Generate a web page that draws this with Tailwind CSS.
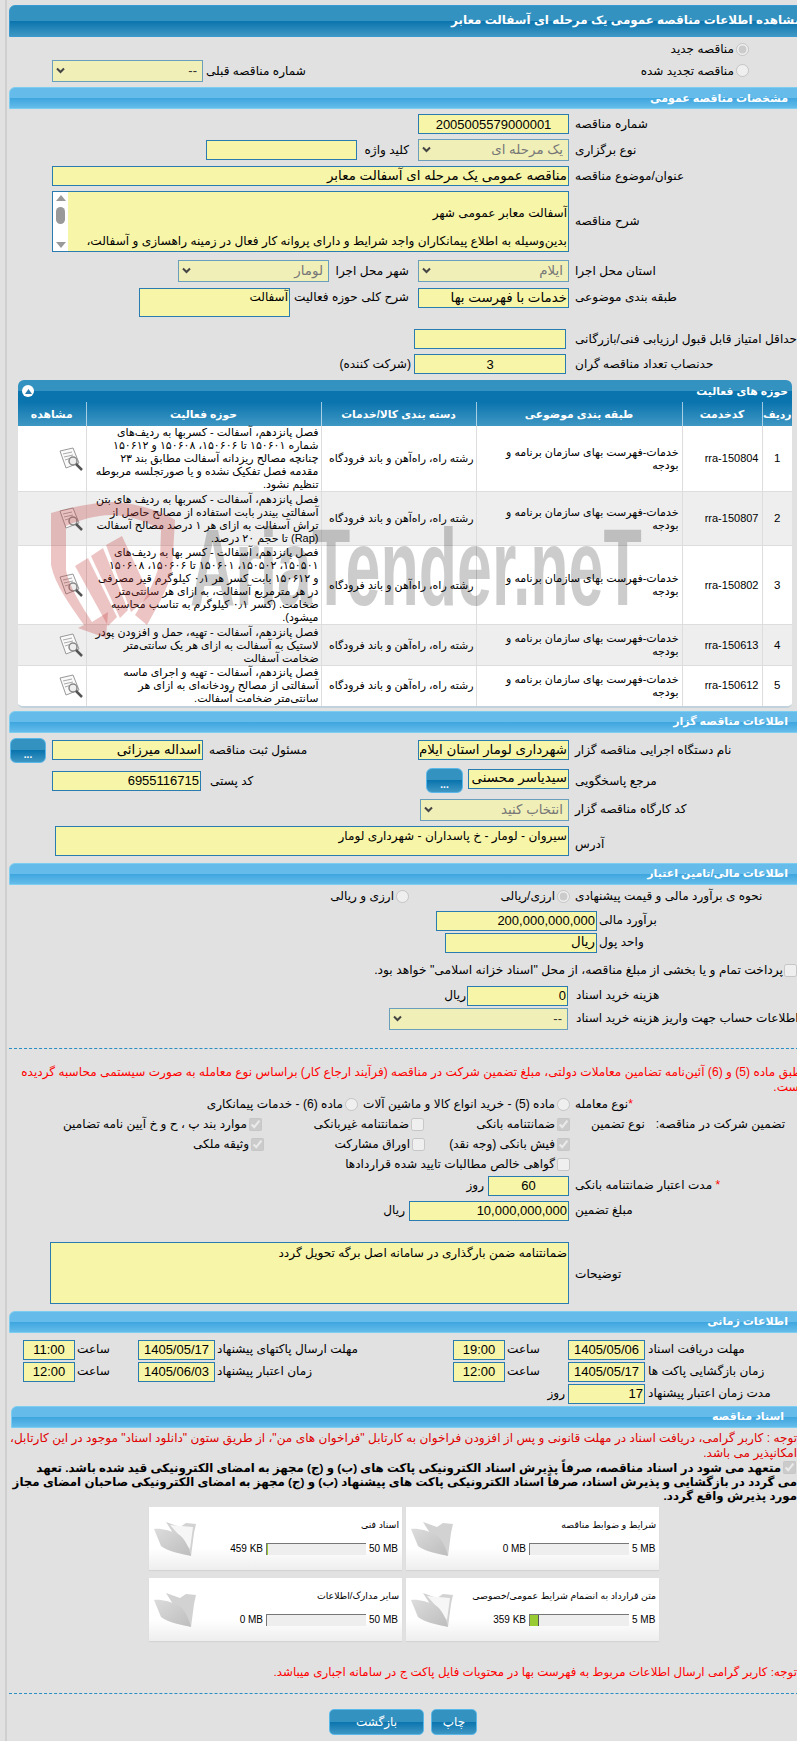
<!DOCTYPE html>
<html lang="fa">
<head>
<meta charset="UTF-8" />
<title>مشاهده اطلاعات مناقصه</title>
<script src="https://cdn.jsdelivr.net/npm/@tailwindcss/browser@4"></script>
</head>
<body class="relative w-[797px] h-[1741px] overflow-hidden bg-[#e1e1e1] text-black text-[12.1px] [font-family:'Liberation_Sans','DejaVu_Sans',sans-serif]">

<div class="absolute left-[5px] top-0 h-full w-[2px] bg-[#cfcfcf]"></div>

<div dir="rtl" class="ml-[9px] w-[800px] pt-[5px]">

  <!-- title -->
  <div class="h-[32px] flex items-center pr-[6px] rounded-tl-[6px] font-bold text-[11.9px] text-white bg-[linear-gradient(#3392c0_50%,#0a74ae_50%,#3f97c3)] border border-[#3a9ad0] whitespace-nowrap">مشاهده اطلاعات مناقصه عمومی یک مرحله ای آسفالت معابر</div>

  <div class="flex items-center h-[14px] mt-[5px] pr-[60px]">
    <input type="radio" checked disabled class="m-0 size-[13px]" />
    <span class="mr-[2px]">مناقصه جدید</span>
  </div>
  <div class="flex items-center justify-between h-[22px] mt-[4px] pr-[60px] pl-[43px]">
    <div class="flex items-center">
      <input type="radio" disabled class="m-0 size-[13px]" />
      <span class="mr-[2px]">مناقصه تجدید شده</span>
    </div>
    <div class="flex items-center gap-[3px]">
      <span>شماره مناقصه قبلی</span>
      <div class="relative w-[151px] h-[22px]">
        <select disabled class="appearance-none w-full h-full px-[5px] bg-[#f0efb8] border border-[#6a9fbb] text-[#333] text-[13px]"><option>--</option></select>
        <svg class="absolute left-[4px] top-[7px] w-[9px] h-[7px]" viewBox="0 0 9 7"><path d="M1 1.500 4.500 5 8 1.500" fill="none" stroke="#444" stroke-width="2"/></svg>
      </div>
    </div>
  </div>

  <!-- general -->
  <div class="h-[22px] mt-[5px] flex items-center pr-[20px] rounded-tl-[6px] font-bold text-[11px] text-white bg-[linear-gradient(#65bbea_50%,#3ea5de_50%,#64bcea)] border border-[#7ccdf0]">مشخصات مناقصه عمومی</div>

  <div class="flex items-center h-[20px] mt-[5px]">
    <label class="w-[234px] text-left">شماره مناقصه</label>
    <input value="2005005579000001" readonly class="w-[151px] h-[20px] mr-[6px] px-[1px] text-center text-[13px] bg-[#f7f5a8] border border-[#2a7bb0]" />
  </div>
  <div class="flex items-center h-[22px] mt-[5px]">
    <label class="w-[234px] text-left">نوع برگزاری</label>
    <div class="relative w-[151px] h-[22px] mr-[6px]">
      <select disabled class="appearance-none w-full h-full px-[5px] bg-[#f0efb8] border border-[#6a9fbb] text-[#777] text-[13.4px]"><option>یک مرحله ای</option></select>
      <svg class="absolute left-[4px] top-[7px] w-[9px] h-[7px]" viewBox="0 0 9 7"><path d="M1 1.500 4.500 5 8 1.500" fill="none" stroke="#444" stroke-width="2"/></svg>
    </div>
    <label class="w-[47px] mr-[9px] text-right whitespace-nowrap">کلید واژه</label>
    <input readonly class="w-[151px] h-[20px] mr-[5px] bg-[#f7f5a8] border border-[#2a7bb0]" />
  </div>
  <div class="flex items-center h-[20px] mt-[5px]">
    <label class="w-[234px] text-left">عنوان/موضوع مناقصه</label>
    <input value="مناقصه عمومی یک مرحله ای آسفالت معابر" readonly class="w-[517px] h-[20px] mr-[6px] px-[1px] text-[13.4px] bg-[#f7f5a8] border border-[#2a7bb0]" />
  </div>
  <div class="flex items-center h-[61px] mt-[5px]">
    <label class="w-[234px] text-left">شرح مناقصه</label>
    <div class="flex w-[517px] h-[61px] mr-[6px] bg-[#f7f5a8] border border-[#2a7bb0] overflow-hidden">
      <div class="flex-1 px-[1px] leading-[14px] whitespace-nowrap overflow-hidden"><br />آسفالت معابر عمومی شهر<br /><br />بدین‌وسیله به اطلاع پیمانکاران واجد شرایط و دارای پروانه کار فعال در زمینه راهسازی و آسفالت،</div>
      <div class="w-[15px] bg-white flex flex-col items-center justify-between py-[3px]">
        <div class="w-0 h-0 border-x-[5px] border-x-transparent border-b-[6px] border-b-[#999]"></div>
        <div class="w-[9px] h-[17px] -mt-[12px] rounded-full bg-[#999]"></div>
        <div class="w-0 h-0 border-x-[5px] border-x-transparent border-t-[6px] border-t-[#999]"></div>
      </div>
    </div>
  </div>
  <div class="flex items-center h-[22px] mt-[8px]">
    <label class="w-[234px] text-left">استان محل اجرا</label>
    <div class="relative w-[151px] h-[22px] mr-[6px]">
      <select disabled class="appearance-none w-full h-full px-[5px] bg-[#f0efb8] border border-[#6a9fbb] text-[#777] text-[13.4px]"><option>ایلام</option></select>
      <svg class="absolute left-[4px] top-[7px] w-[9px] h-[7px]" viewBox="0 0 9 7"><path d="M1 1.500 4.500 5 8 1.500" fill="none" stroke="#444" stroke-width="2"/></svg>
    </div>
    <label class="w-[77px] mr-[9px] text-right whitespace-nowrap">شهر محل اجرا</label>
    <div class="relative w-[151px] h-[22px] mr-[3px]">
      <select disabled class="appearance-none w-full h-full px-[5px] bg-[#f0efb8] border border-[#6a9fbb] text-[#777] text-[13.4px]"><option>لومار</option></select>
      <svg class="absolute left-[4px] top-[7px] w-[9px] h-[7px]" viewBox="0 0 9 7"><path d="M1 1.500 4.500 5 8 1.500" fill="none" stroke="#444" stroke-width="2"/></svg>
    </div>
  </div>
  <div class="flex items-start h-[28px] mt-[6px]">
    <label class="w-[234px] text-left">طبقه بندی موضوعی</label>
    <input value="خدمات با فهرست بها" readonly class="w-[151px] h-[20px] mr-[6px] px-[1px] text-[13.4px] bg-[#f7f5a8] border border-[#2a7bb0]" />
    <label class="w-[114px] mr-[9px] text-right whitespace-nowrap">شرح کلی حوزه فعالیت</label>
    <div class="w-[151px] h-[29px] mr-[5px] px-[1px] text-[12px] leading-[16px] bg-[#f7f5a8] border border-[#2a7bb0]">آسفالت</div>
  </div>
  <div class="flex items-center h-[20px] mt-[13px]">
    <label class="w-[234px] text-left whitespace-nowrap">حداقل امتیاز قابل قبول ارزیابی فنی/بازرگانی</label>
    <input readonly class="w-[152px] h-[20px] mr-[9px] bg-[#f7f5a8] border border-[#2a7bb0]" />
  </div>
  <div class="flex items-center h-[20px] mt-[5px]">
    <label class="w-[234px] text-left">حدنصاب تعداد مناقصه گران</label>
    <input value="3" readonly class="w-[152px] h-[20px] mr-[9px] text-center text-[13px] bg-[#f7f5a8] border border-[#2a7bb0]" />
    <span class="mr-[3px]">(شرکت کننده)</span>
  </div>

  <!-- activities -->
  <div class="w-[774px] mr-[17px] mt-[6px] rounded-t-[6px] rounded-b-[5px] border-b-2 border-[#c2d2dc] overflow-hidden">
    <div class="relative h-[22px] flex items-center pr-[4px] font-bold text-[10.8px] text-white bg-[linear-gradient(#3392c0_50%,#0a74ae_50%,#0a74ae)]">
      حوزه های فعالیت
      <div class="absolute left-[4px] top-[5px] size-[12px] rounded-full bg-white flex items-center justify-center"><svg class="w-[7px] h-[5px]" viewBox="0 0 7 5"><path d="M0 5 3.500 0 7 5z" fill="#2a7bb0"/></svg></div>
    </div>
    <table class="w-[774px] table-fixed border-collapse text-[11px] leading-[13px]">
      <colgroup><col class="w-[30px]" /><col class="w-[80px]" /><col class="w-[206px]" /><col class="w-[155px]" /><col class="w-[235px]" /><col class="w-[68px]" /></colgroup>
      <thead>
        <tr class="h-[24px] font-bold text-[10.8px] text-white bg-[linear-gradient(#0a74ae,#3f97c3)]">
          <th class="border-l border-white/60 font-bold">ردیف</th>
          <th class="border-l border-white/60 font-bold">کدخدمت</th>
          <th class="border-l border-white/60 font-bold">طبقه بندی موضوعی</th>
          <th class="border-l border-white/60 font-bold">دسته بندی کالا/خدمات</th>
          <th class="border-l border-white/60 font-bold">حوزه فعالیت</th>
          <th class="font-bold">مشاهده</th>
        </tr>
      </thead>
      <tbody>
        <tr class="h-[65px] bg-white border-b border-[#ddd]">
          <td class="border-l border-[#ddd] text-center text-[11.5px]">1</td>
          <td class="border-l border-[#ddd] text-right pr-[3px]">rra-150804</td>
          <td class="border-l border-[#ddd] pr-[3px]">خدمات-فهرست بهای سازمان برنامه و<br />بودجه</td>
          <td class="border-l border-[#ddd] pr-[2px]">رشته راه، راه‌آهن و باند فرودگاه</td>
          <td class="border-l border-[#ddd] pr-[2px] whitespace-nowrap">فصل پانزدهم، آسفالت - کسربها به ردیف‌های<br />شماره ۱۵۰۶۰۱ تا ۱۵۰۶۰۶، ۱۵۰۶۰۸ و ۱۵۰۶۱۲<br />چنانچه مصالح ریزدانه آسفالت مطابق بند ۲۳<br />مقدمه فصل تفکیک نشده و یا صورتجلسه مربوطه<br />تنظیم نشود.</td>
          <td><svg class="w-[25px] h-[24px] mr-[2px]" viewBox="0 0 25 24"><path d="M1 4 14 1 20 16 7 21z" fill="#fafafa" stroke="#999"/><path d="M4 7 13 5M5 10 14 8M6 13 12 11" stroke="#aaa"/><circle cx="14" cy="14" r="4" fill="#eee" stroke="#888" stroke-width="1.500"/><path d="M17 17 23 23" stroke="#555" stroke-width="2.500"/></svg></td>
        </tr>
        <tr class="h-[54px] bg-[#eeeeee] border-b border-[#ddd]">
          <td class="border-l border-[#ddd] text-center text-[11.5px]">2</td>
          <td class="border-l border-[#ddd] text-right pr-[3px]">rra-150807</td>
          <td class="border-l border-[#ddd] pr-[3px]">خدمات-فهرست بهای سازمان برنامه و<br />بودجه</td>
          <td class="border-l border-[#ddd] pr-[2px]">رشته راه، راه‌آهن و باند فرودگاه</td>
          <td class="border-l border-[#ddd] pr-[2px] whitespace-nowrap">فصل پانزدهم، آسفالت - کسربها به ردیف های بتن<br />آسفالتی بیندر بابت استفاده از مصالح حاصل از<br />تراش آسفالت به ازای هر ۱ درصد مصالح آسفالت<br />(Rap) تا حجم ۲۰ درصد.</td>
          <td><svg class="w-[25px] h-[24px] mr-[2px]" viewBox="0 0 25 24"><path d="M1 4 14 1 20 16 7 21z" fill="#fafafa" stroke="#999"/><path d="M4 7 13 5M5 10 14 8M6 13 12 11" stroke="#aaa"/><circle cx="14" cy="14" r="4" fill="#eee" stroke="#888" stroke-width="1.500"/><path d="M17 17 23 23" stroke="#555" stroke-width="2.500"/></svg></td>
        </tr>
        <tr class="h-[78px] bg-white border-b border-[#ddd]">
          <td class="border-l border-[#ddd] text-center text-[11.5px]">3</td>
          <td class="border-l border-[#ddd] text-right pr-[3px]">rra-150802</td>
          <td class="border-l border-[#ddd] pr-[3px]">خدمات-فهرست بهای سازمان برنامه و<br />بودجه</td>
          <td class="border-l border-[#ddd] pr-[2px]">رشته راه، راه‌آهن و باند فرودگاه</td>
          <td class="border-l border-[#ddd] pr-[2px] whitespace-nowrap">فصل پانزدهم، آسفالت - کسر بها به ردیف‌های<br />۱۵۰۵۰۱، ۱۵۰۵۰۲، ۱۵۰۶۰۱ تا ۱۵۰۶۰۶، ۱۵۰۶۰۸<br />و ۱۵۰۶۱۲ بابت کسر هر ۰٫۱ کیلوگرم قیر مصرفی<br />در هر مترمربع آسفالت، به ازای هر سانتی‌متر<br />ضخامت. (کسر ۰٫۱ کیلوگرم به تناسب محاسبه<br />میشود).</td>
          <td><svg class="w-[25px] h-[24px] mr-[2px]" viewBox="0 0 25 24"><path d="M1 4 14 1 20 16 7 21z" fill="#fafafa" stroke="#999"/><path d="M4 7 13 5M5 10 14 8M6 13 12 11" stroke="#aaa"/><circle cx="14" cy="14" r="4" fill="#eee" stroke="#888" stroke-width="1.500"/><path d="M17 17 23 23" stroke="#555" stroke-width="2.500"/></svg></td>
        </tr>
        <tr class="h-[41px] bg-[#eeeeee] border-b border-[#ddd]">
          <td class="border-l border-[#ddd] text-center text-[11.5px]">4</td>
          <td class="border-l border-[#ddd] text-right pr-[3px]">rra-150613</td>
          <td class="border-l border-[#ddd] pr-[3px]">خدمات-فهرست بهای سازمان برنامه و<br />بودجه</td>
          <td class="border-l border-[#ddd] pr-[2px]">رشته راه، راه‌آهن و باند فرودگاه</td>
          <td class="border-l border-[#ddd] pr-[2px] whitespace-nowrap">فصل پانزدهم، آسفالت - تهیه، حمل و افزودن پودر<br />لاستیک به آسفالت به ازای هر یک سانتی‌متر<br />ضخامت آسفالت</td>
          <td><svg class="w-[25px] h-[24px] mr-[2px]" viewBox="0 0 25 24"><path d="M1 4 14 1 20 16 7 21z" fill="#fafafa" stroke="#999"/><path d="M4 7 13 5M5 10 14 8M6 13 12 11" stroke="#aaa"/><circle cx="14" cy="14" r="4" fill="#eee" stroke="#888" stroke-width="1.500"/><path d="M17 17 23 23" stroke="#555" stroke-width="2.500"/></svg></td>
        </tr>
        <tr class="h-[40px] bg-white">
          <td class="border-l border-[#ddd] text-center text-[11.5px]">5</td>
          <td class="border-l border-[#ddd] text-right pr-[3px]">rra-150612</td>
          <td class="border-l border-[#ddd] pr-[3px]">خدمات-فهرست بهای سازمان برنامه و<br />بودجه</td>
          <td class="border-l border-[#ddd] pr-[2px]">رشته راه، راه‌آهن و باند فرودگاه</td>
          <td class="border-l border-[#ddd] pr-[2px] whitespace-nowrap">فصل پانزدهم، آسفالت - تهیه و اجرای ماسه<br />آسفالتی از مصالح رودخانه‌ای به ازای هر<br />سانتی‌متر ضخامت آسفالت.</td>
          <td><svg class="w-[25px] h-[24px] mr-[2px]" viewBox="0 0 25 24"><path d="M1 4 14 1 20 16 7 21z" fill="#fafafa" stroke="#999"/><path d="M4 7 13 5M5 10 14 8M6 13 12 11" stroke="#aaa"/><circle cx="14" cy="14" r="4" fill="#eee" stroke="#888" stroke-width="1.500"/><path d="M17 17 23 23" stroke="#555" stroke-width="2.500"/></svg></td>
        </tr>
      </tbody>
    </table>
  </div>

  <!-- organiser -->
  <div class="h-[22px] mt-[3px] flex items-center pr-[20px] rounded-tl-[6px] font-bold text-[11px] text-white bg-[linear-gradient(#65bbea_50%,#3ea5de_50%,#64bcea)] border border-[#7ccdf0]">اطلاعات مناقصه گزار</div>

  <div class="flex items-center h-[25px] mt-[5px]">
    <label class="w-[234px] text-left">نام دستگاه اجرایی مناقصه گزار</label>
    <input value="شهرداری لومار استان ایلام" readonly class="w-[151px] h-[20px] mr-[6px] px-[1px] text-[13.4px] bg-[#f7f5a8] border border-[#2a7bb0]" />
    <label class="w-[209px] text-left whitespace-nowrap">مسئول ثبت مناقصه</label>
    <input value="اسداله میرزائی" readonly class="w-[151px] h-[20px] mr-[6px] px-[1px] text-[13.4px] bg-[#f7f5a8] border border-[#2a7bb0]" />
    <button class="w-[36px] h-[25px] mr-[6px] rounded-[6px] border border-[#5ab8e8] font-bold text-white text-[10px] leading-[8px] pt-[10px] bg-[linear-gradient(#3392c0_50%,#0a74ae_50%,#3f97c3)]">...</button>
  </div>
  <div class="flex items-start h-[25px] mt-[5px]">
    <label class="w-[234px] text-left mt-[4px]">مرجع پاسخگویی</label>
    <input value="سیدیاسر محسنی" readonly class="w-[101px] h-[20px] mr-[6px] mt-[1px] px-[1px] text-[13.4px] bg-[#f7f5a8] border border-[#2a7bb0]" />
    <button class="w-[37px] h-[25px] mr-[5px] rounded-[6px] border border-[#5ab8e8] font-bold text-white text-[10px] leading-[8px] pt-[10px] bg-[linear-gradient(#3392c0_50%,#0a74ae_50%,#3f97c3)]">...</button>
    <label class="w-[219px] mt-[4px] pl-[3px] text-left whitespace-nowrap">کد پستی</label>
    <input value="6955116715" readonly class="w-[149px] h-[20px] mr-[6px] mt-[3px] px-[1px] text-[13px] bg-[#f7f5a8] border border-[#2a7bb0]" />
  </div>
  <div class="flex items-center h-[22px] mt-[6px]">
    <label class="w-[234px] text-left">کد کارگاه مناقصه گزار</label>
    <div class="relative w-[149px] h-[22px] mr-[6px]">
      <select disabled class="appearance-none w-full h-full px-[5px] bg-[#f0efb8] border border-[#6a9fbb] text-[#777] text-[13.4px]"><option>انتخاب کنید</option></select>
      <svg class="absolute left-[4px] top-[7px] w-[9px] h-[7px]" viewBox="0 0 9 7"><path d="M1 1.500 4.500 5 8 1.500" fill="none" stroke="#444" stroke-width="2"/></svg>
    </div>
  </div>
  <div class="flex items-center h-[30px] mt-[5px]">
    <label class="w-[234px] text-left mt-[8px]">آدرس</label>
    <div class="w-[514px] h-[30px] mr-[6px] px-[1px] bg-[#f7f5a8] border border-[#2a7bb0]">سیروان - لومار - خ پاسداران - شهرداری لومار</div>
  </div>

  <!-- finance -->
  <div class="h-[22px] mt-[7px] flex items-center pr-[20px] rounded-tl-[6px] font-bold text-[11px] text-white bg-[linear-gradient(#65bbea_50%,#3ea5de_50%,#64bcea)] border border-[#7ccdf0]">اطلاعات مالی/تامین اعتبار</div>

  <div class="flex items-center h-[14px] mt-[5px]">
    <label class="w-[234px] text-left whitespace-nowrap">نحوه ی برآورد مالی و قیمت پیشنهادی</label>
    <input type="radio" checked disabled class="m-0 mr-[5px] size-[13px]" />
    <span class="mr-[2px] w-[146px]">ارزی/ریالی</span>
    <input type="radio" disabled class="m-0 size-[13px]" />
    <span class="mr-[2px]">ارزی و ریالی</span>
  </div>
  <div class="flex items-center h-[20px] mt-[7px]">
    <label class="w-[210px] text-left">برآورد مالی</label>
    <input value="200,000,000,000" readonly class="w-[161px] h-[20px] mr-[2px] px-[1px] text-[13px] bg-[#f7f5a8] border border-[#2a7bb0]" />
  </div>
  <div class="flex items-center h-[20px] mt-[2px]">
    <label class="w-[210px] text-left">واحد پول</label>
    <input value="ریال" readonly class="w-[152px] h-[20px] mr-[2px] px-[1px] text-[13.4px] bg-[#f7f5a8] border border-[#2a7bb0]" />
  </div>
  <div class="flex items-center h-[14px] mt-[11px] pr-[12px]">
    <input type="checkbox" disabled class="m-0 size-[13px]" />
    <span class="mr-[1px] text-[12.3px]">پرداخت تمام و یا بخشی از مبلغ مناقصه، از محل "اسناد خزانه اسلامی" خواهد بود.</span>
  </div>
  <div class="flex items-center h-[20px] mt-[8px]">
    <label class="w-[233px] text-left">هزینه خرید اسناد</label>
    <input value="0" readonly class="w-[101px] h-[20px] mr-[8px] px-[1px] text-[13px] bg-[#f7f5a8] border border-[#2a7bb0]" />
    <span class="mr-[1px]">ریال</span>
  </div>
  <div class="flex items-center h-[22px] mt-[2px]">
    <label class="w-[233px] text-left whitespace-nowrap">اطلاعات حساب جهت واریز هزینه خرید اسناد</label>
    <div class="relative w-[179px] h-[22px] mr-[8px]">
      <select disabled class="appearance-none w-full h-full px-[5px] bg-[#f0efb8] border border-[#6a9fbb] text-[#333] text-[13px]"><option>--</option></select>
      <svg class="absolute left-[4px] top-[7px] w-[9px] h-[7px]" viewBox="0 0 9 7"><path d="M1 1.500 4.500 5 8 1.500" fill="none" stroke="#444" stroke-width="2"/></svg>
    </div>
  </div>
  <div class="mt-[18px] border-t border-dashed border-[#2a8ec3]"></div>

  <!-- guarantee -->
  <p class="mt-[16px] pr-[7px] leading-[15px] text-[#ff0000] whitespace-nowrap">طبق ماده (5) و (6) آئین‌نامه تضامین معاملات دولتی، مبلغ تضمین شرکت در مناقصه (فرآیند ارجاع کار) براساس نوع معامله به صورت سیستمی محاسبه گردیده<br />است.</p>
  <div class="flex items-center h-[20px]">
    <label class="w-[234px] text-left"><span class="text-[#ff0000]">*</span>نوع معامله</label>
    <input type="radio" disabled class="m-0 mr-[5px] size-[13px]" />
    <span class="mr-[2px] w-[197px] whitespace-nowrap">ماده (5) - خرید انواع کالا و ماشین آلات</span>
    <input type="radio" disabled class="m-0 size-[13px]" />
    <span class="mr-[2px]">ماده (6) - خدمات پیمانکاری</span>
  </div>
  <div class="flex items-center h-[20px]">
    <label class="w-[150px] pr-[24px] whitespace-nowrap text-left">تضمین شرکت در مناقصه:</label>
    <label class="w-[68px] text-left">نوع تضمین</label>
    <input type="checkbox" checked disabled class="m-0 mr-[21px] size-[13px]" />
    <span class="mr-[2px] w-[131px]">ضمانتنامه بانکی</span>
    <input type="checkbox" disabled class="m-0 size-[13px]" />
    <span class="mr-[2px] w-[147px]">ضمانتنامه غیربانکی</span>
    <input type="checkbox" checked disabled class="m-0 size-[13px]" />
    <span class="mr-[2px] whitespace-nowrap">موارد بند پ ، ح و خ آیین نامه تضامین</span>
  </div>
  <div class="flex items-center h-[20px]">
    <div class="w-[234px]"></div>
    <input type="checkbox" checked disabled class="m-0 mr-[5px] size-[13px]" />
    <span class="mr-[2px] w-[130px] whitespace-nowrap">فیش بانکی (وجه نقد)</span>
    <input type="checkbox" disabled class="m-0 size-[13px]" />
    <span class="mr-[2px] w-[146px]">اوراق مشارکت</span>
    <input type="checkbox" checked disabled class="m-0 size-[13px]" />
    <span class="mr-[2px]">وثیقه ملکی</span>
  </div>
  <div class="flex items-center h-[20px]">
    <div class="w-[234px]"></div>
    <input type="checkbox" disabled class="m-0 mr-[5px] size-[13px]" />
    <span class="mr-[2px]">گواهی خالص مطالبات تایید شده قراردادها</span>
  </div>
  <div class="flex items-center h-[20px] mt-[1px]">
    <label class="w-[234px] text-left"><span class="text-[#ff0000]">*</span> مدت اعتبار ضمانتنامه بانکی</label>
    <input value="60" readonly class="w-[81px] h-[20px] mr-[6px] text-center text-[13px] bg-[#f7f5a8] border border-[#2a7bb0]" />
    <span class="mr-[4px]">روز</span>
  </div>
  <div class="flex items-center h-[20px] mt-[5px]">
    <label class="w-[234px] text-left">مبلغ تضمین</label>
    <input value="10,000,000,000" readonly class="w-[160px] h-[20px] mr-[6px] px-[1px] text-[13px] bg-[#f7f5a8] border border-[#2a7bb0]" />
    <span class="mr-[4px]">ریال</span>
  </div>
  <div class="flex items-center h-[62px] mt-[21px]">
    <label class="w-[234px] text-left mt-[4px]">توضیحات</label>
    <div class="w-[519px] h-[62px] mr-[6px] px-[1px] pt-[1px] bg-[#f7f5a8] border border-[#2a7bb0]">ضمانتنامه ضمن بارگذاری در سامانه اصل برگه تحویل گردد</div>
  </div>

  <!-- dates -->
  <div class="h-[22px] mt-[7px] flex items-center pr-[20px] rounded-tl-[6px] font-bold text-[11px] text-white bg-[linear-gradient(#65bbea_50%,#3ea5de_50%,#64bcea)] border border-[#7ccdf0]">اطلاعات زمانی</div>

  <div class="flex items-center h-[20px] mt-[7px]">
    <label class="w-[161px] text-left">مهلت دریافت اسناد</label>
    <input value="1405/05/06" readonly class="w-[77px] h-[20px] mr-[3px] text-center text-[13px] bg-[#f7f5a8] border border-[#2a7bb0]" />
    <label class="w-[58px] mr-[3px] text-left">ساعت</label>
    <input value="19:00" readonly class="w-[52px] h-[20px] mr-[2px] text-center text-[13px] bg-[#f7f5a8] border border-[#2a7bb0]" />
    <label class="w-[236px] text-left">مهلت ارسال پاکتهای پیشنهاد</label>
    <input value="1405/05/17" readonly class="w-[77px] h-[20px] mr-[2px] text-center text-[13px] bg-[#f7f5a8] border border-[#2a7bb0]" />
    <label class="w-[59px] mr-[2px] text-left">ساعت</label>
    <input value="11:00" readonly class="w-[52px] h-[20px] mr-[2px] text-center text-[13px] bg-[#f7f5a8] border border-[#2a7bb0]" />
  </div>
  <div class="flex items-center h-[20px] mt-[2px]">
    <label class="w-[161px] text-left">زمان بازگشایی پاکت ها</label>
    <input value="1405/05/17" readonly class="w-[77px] h-[20px] mr-[3px] text-center text-[13px] bg-[#f7f5a8] border border-[#2a7bb0]" />
    <label class="w-[58px] mr-[3px] text-left">ساعت</label>
    <input value="12:00" readonly class="w-[52px] h-[20px] mr-[2px] text-center text-[13px] bg-[#f7f5a8] border border-[#2a7bb0]" />
    <label class="w-[236px] text-left">زمان اعتبار پیشنهاد</label>
    <input value="1405/06/03" readonly class="w-[77px] h-[20px] mr-[2px] text-center text-[13px] bg-[#f7f5a8] border border-[#2a7bb0]" />
    <label class="w-[59px] mr-[2px] text-left">ساعت</label>
    <input value="12:00" readonly class="w-[52px] h-[20px] mr-[2px] text-center text-[13px] bg-[#f7f5a8] border border-[#2a7bb0]" />
  </div>
  <div class="flex items-center h-[20px] mt-[2px]">
    <label class="w-[161px] text-left whitespace-nowrap">مدت زمان اعتبار پیشنهاد</label>
    <input value="17" readonly class="w-[77px] h-[20px] mr-[3px] px-[1px] text-[13px] bg-[#f7f5a8] border border-[#2a7bb0]" />
    <span class="mr-[3px]">روز</span>
  </div>

  <!-- documents -->
  <div class="h-[22px] mt-[2px] ml-[2px] flex items-center pr-[24px] rounded-tl-[6px] font-bold text-[11px] text-white bg-[linear-gradient(#65bbea_50%,#3ea5de_50%,#64bcea)] border border-[#7ccdf0]">اسناد مناقصه</div>
  <p class="mt-[3px] pr-[12px] text-[12.1px] leading-[15px] text-[#e00000] whitespace-nowrap">توجه : کاربر گرامی، دریافت اسناد در مهلت قانونی و پس از افزودن فراخوان به کارتابل "فراخوان های من"، از طریق ستون "دانلود اسناد" موجود در این کارتابل،<br />امکانپذیر می باشد.</p>
  <p class="relative pr-[28px] leading-[14px] text-[11.8px] font-bold whitespace-nowrap"><input type="checkbox" checked disabled class="absolute right-[13px] top-0 m-0 size-[13px]" />متعهد می شود در اسناد مناقصه، صرفاً پذیرش اسناد الکترونیکی پاکت های (ب) و (ج) مجهز به امضای الکترونیکی قید شده باشد. تعهد<br /><span class="-mr-[16px]">می گردد در بازگشایی و پذیرش اسناد، صرفاً اسناد الکترونیکی پاکت های پیشنهاد (ب) و (ج) مجهز به امضای الکترونیکی صاحبان امضای مجاز</span><br /><span class="-mr-[16px]">مورد پذیرش واقع گردد.</span></p>

  <div class="grid grid-cols-[253px_253px] gap-x-[4px] gap-y-[8px] w-[510px] mr-[150px] mt-[4px]">
    <div class="relative h-[63px] pt-[11px] pr-[3px] bg-[linear-gradient(#fff_65%,#eee)] shadow-[0_1px_1px_#d4d4d4]">
      <svg class="absolute left-[4px] top-[14px] w-[44px] h-[36px]" viewBox="0 0 44 36"><defs><linearGradient id="flap" x1="0" y1="0" x2="1" y2="1"><stop offset="0" stop-color="#dcdcdc"/><stop offset="1" stop-color="#bdbdbd"/></linearGradient></defs><path d="M13 1 27 6 33 2 43 3 41 12 38 35 25 20z" fill="#d2d2d2"/><path d="M1 8C8 7 18 10 25 13 31 16 36 26 38 35 30 33 15 31 8 25z" fill="url(#flap)"/></svg>
      <div class="relative text-[9.4px] leading-[13px]">شرایط و ضوابط مناقصه</div>
      <div dir="ltr" class="flex items-center justify-end h-[12px] mt-[12px] text-[10px]">
        <span class="mr-[3px] whitespace-nowrap">0 MB</span>
        <div class="w-[100px] h-[12px] bg-[#eee] border-t border-l border-[#777]"></div>
        <span class="w-[27px] pl-[3px] whitespace-nowrap">5 MB</span>
      </div>
    </div>
    <div class="relative h-[63px] pt-[11px] pr-[3px] bg-[linear-gradient(#fff_65%,#eee)] shadow-[0_1px_1px_#d4d4d4]">
      <svg class="absolute left-[4px] top-[14px] w-[44px] h-[36px]" viewBox="0 0 44 36"><path d="M13 1 27 6 33 2 43 3 41 12 38 35 25 20z" fill="#d2d2d2"/><path d="M17 4 40 6 37 28 26 14z" fill="#f6f6f6"/><path d="M1 8C8 7 18 10 25 13 31 16 36 26 38 35 30 33 15 31 8 25z" fill="url(#flap)"/></svg>
      <div class="relative text-[9.4px] leading-[13px]">اسناد فنی</div>
      <div dir="ltr" class="flex items-center justify-end h-[12px] mt-[12px] text-[10px]">
        <span class="mr-[3px] whitespace-nowrap">459 KB</span>
        <div class="w-[100px] h-[12px] bg-[#eee] border-t border-l border-[#777]"><div class="w-[1px] h-full bg-[#9c3]"></div></div>
        <span class="w-[33px] pl-[3px] whitespace-nowrap">50 MB</span>
      </div>
    </div>
    <div class="relative h-[63px] pt-[11px] pr-[3px] bg-[linear-gradient(#fff_65%,#eee)] shadow-[0_1px_1px_#d4d4d4]">
      <svg class="absolute left-[4px] top-[14px] w-[44px] h-[36px]" viewBox="0 0 44 36"><path d="M13 1 27 6 33 2 43 3 41 12 38 35 25 20z" fill="#d2d2d2"/><path d="M17 4 40 6 37 28 26 14z" fill="#f6f6f6"/><path d="M1 8C8 7 18 10 25 13 31 16 36 26 38 35 30 33 15 31 8 25z" fill="url(#flap)"/></svg>
      <div class="relative text-[9.4px] leading-[13px] whitespace-nowrap">متن قرارداد به انضمام شرایط عمومی/خصوصی</div>
      <div dir="ltr" class="flex items-center justify-end h-[12px] mt-[12px] text-[10px]">
        <span class="mr-[3px] whitespace-nowrap">359 KB</span>
        <div class="w-[100px] h-[12px] bg-[#eee] border-t border-l border-[#777]"><div class="w-[9px] h-full bg-[#9c3] border-r border-[#555]"></div></div>
        <span class="w-[27px] pl-[3px] whitespace-nowrap">5 MB</span>
      </div>
    </div>
    <div class="relative h-[63px] pt-[11px] pr-[3px] bg-[linear-gradient(#fff_65%,#eee)] shadow-[0_1px_1px_#d4d4d4]">
      <svg class="absolute left-[4px] top-[14px] w-[44px] h-[36px]" viewBox="0 0 44 36"><path d="M13 1 27 6 33 2 43 3 41 12 38 35 25 20z" fill="#d2d2d2"/><path d="M1 8C8 7 18 10 25 13 31 16 36 26 38 35 30 33 15 31 8 25z" fill="url(#flap)"/></svg>
      <div class="relative text-[9.4px] leading-[13px]">سایر مدارک/اطلاعات</div>
      <div dir="ltr" class="flex items-center justify-end h-[12px] mt-[12px] text-[10px]">
        <span class="mr-[3px] whitespace-nowrap">0 MB</span>
        <div class="w-[100px] h-[12px] bg-[#eee] border-t border-l border-[#777]"></div>
        <span class="w-[33px] pl-[3px] whitespace-nowrap">50 MB</span>
      </div>
    </div>
  </div>

  <p class="mt-[24px] pr-[12px] text-[11.8px] leading-[15px] text-[#ff0000] whitespace-nowrap">توجه: کاربر گرامی ارسال اطلاعات مربوط به فهرست بها در محتویات فایل پاکت ج در سامانه اجباری میباشد.</p>
  <div class="mt-[13px] border-t border-dashed border-[#2a8ec3]"></div>

  <div class="flex gap-[7px] mt-[15px] mr-[332px]">
    <button class="w-[46px] h-[26px] rounded-[5px] border border-[#5ab8e8] text-white text-[12px] bg-[linear-gradient(#3392c0_50%,#0a74ae_50%,#3f97c3)]">چاپ</button>
    <button class="w-[95px] h-[26px] rounded-[5px] border border-[#5ab8e8] text-white text-[12px] bg-[linear-gradient(#3392c0_50%,#0a74ae_50%,#3f97c3)]">بازگشت</button>
  </div>
</div>

<!-- watermark over the activity table -->
<svg class="absolute left-[50px] top-[500px] w-[130px] h-[140px] pointer-events-none" viewBox="50 500 130 140">
  <path d="M51 513C75 506 95 503 112 502 135 503 160 510 175 520L172 570C168 590 155 610 147 625L135 615C148 595 158 575 160 560L161 530C145 520 125 515 112 515 95 515 80 520 66 526L66 570C70 590 85 610 92 622L108 612 106 638 78 628 84 625C70 605 55 585 51 565z" fill="#c43c3c" fill-opacity=".3"/>
  <path d="M75 566 88 558 117 617 108 626zM91 556 103 548 128 610 120 618zM106 545 122 536 150 596 131 612z" fill="#c43c3c" fill-opacity=".3"/>
</svg>
<div dir="ltr" class="absolute left-[190px] top-[507px] origin-left scale-x-[.57] text-[110px] leading-[120px] font-bold text-black/20 whitespace-nowrap pointer-events-none">AriaTender.neT</div>

</body>
</html>
